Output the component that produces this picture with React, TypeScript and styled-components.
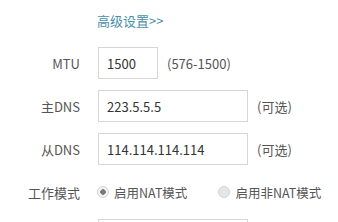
import React, { useState } from "react";
import styled, { createGlobalStyle } from "styled-components";

const GlobalStyle = createGlobalStyle`
  body {
    margin: 0;
    background: #fff;
    font-family: "Noto Sans CJK SC", "Noto Sans", sans-serif;
  }
`;

const StForm = styled.section`
  display: grid;
  grid-template-columns: 80px 1fr;
  grid-auto-rows: 32px;
  column-gap: 18px;
  row-gap: 11px;
  padding-top: 4px;
  font-size: 13px;
  color: #555;
`;

const StLabel = styled.label`
  display: flex;
  align-items: center;
  justify-content: flex-end;
  color: #555;
`;

const StField = styled.div`
  display: flex;
  align-items: center;
  gap: 9px;
`;

const StLink = styled.a`
  color: #4a8fab;
  font-size: 13px;
  text-decoration: none;
  cursor: pointer;
  margin-left: -1px;
`;

const StInput = styled.input<{ $w: number }>`
  box-sizing: border-box;
  width: ${(p) => p.$w}px;
  height: 32px;
  border: 1px solid #d6d6d6;
  padding: 0 8px;
  font-family: "Noto Sans CJK SC", "Noto Sans", sans-serif;
  font-size: 13px;
  color: #333;
  outline: none;
  background: #fff;
`;

const StHint = styled.span`
  color: #555;
`;

const StRadioGroup = styled.div`
  display: flex;
  align-items: center;
  gap: 32px;
  font-size: 12.5px;
`;

const StRadio = styled.span`
  display: flex;
  align-items: center;
  gap: 5px;
  cursor: pointer;
  color: #555;
`;

const StDot = styled.span<{ $on: boolean }>`
  box-sizing: border-box;
  width: 12px;
  height: 12px;
  border-radius: 50%;
  border: 1px solid #d4d4d4;
  margin-left: -1px;
  background: ${(p) =>
    p.$on
      ? "radial-gradient(circle, #777 0 2.5px, #f2f2f2 3px)"
      : "#e6e6e6"};
`;

export default function App() {
  const [nat, setNat] = useState(true);

  return (
    <>
      <GlobalStyle />
      <StForm>
        <span />
        <StField>
          <StLink>高级设置&gt;&gt;</StLink>
        </StField>

        <StLabel>MTU</StLabel>
        <StField>
          <StInput $w={60} defaultValue="1500" />
          <StHint>(576-1500)</StHint>
        </StField>

        <StLabel>主DNS</StLabel>
        <StField>
          <StInput $w={150} defaultValue="223.5.5.5" />
          <StHint>(可选)</StHint>
        </StField>

        <StLabel>从DNS</StLabel>
        <StField>
          <StInput $w={150} defaultValue="114.114.114.114" />
          <StHint>(可选)</StHint>
        </StField>

        <StLabel>工作模式</StLabel>
        <StField>
          <StRadioGroup>
            <StRadio onClick={() => setNat(true)}>
              <StDot $on={nat} />
              启用NAT模式
            </StRadio>
            <StRadio onClick={() => setNat(false)}>
              <StDot $on={!nat} />
              启用非NAT模式
            </StRadio>
          </StRadioGroup>
        </StField>

        <span />
        <StField>
          <StInput $w={150} defaultValue="" />
        </StField>
      </StForm>
    </>
  );
}
